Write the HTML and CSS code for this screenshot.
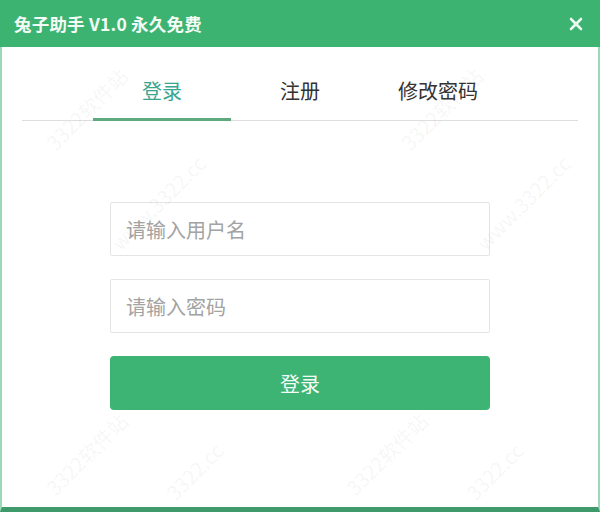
FILE: index.html
```html
<!DOCTYPE html>
<html lang="zh-CN">
<head>
<meta charset="utf-8">
<title>兔子助手</title>
<link rel="stylesheet" href="styles.css">
</head>
<body>
<div class="window">
  <header class="titlebar">
    <span class="title">兔子助手 V1.0 永久免费</span>
    <span class="close" aria-label="关闭">
      <svg width="14" height="14" viewBox="0 0 14 14"><path d="M2 2 L12 12 M12 2 L2 12" stroke="#eefaf2" stroke-width="2.6" stroke-linecap="round"/></svg>
    </span>
  </header>
  <main class="content">
    <nav class="tabs-wrap">
      <div class="tabs">
        <div class="tab active">登录</div>
        <div class="tab">注册</div>
        <div class="tab">修改密码</div>
      </div>
    </nav>
    <form class="form">
      <input class="field" type="text" placeholder="请输入用户名">
      <input class="field" type="password" placeholder="请输入密码">
      <button class="btn" type="button">登录</button>
    </form>
  </main>
  <div class="watermarks" aria-hidden="true">
    <span class="wm wm1">3322软件站</span>
    <span class="wm wm2">www.3322.cc</span>
    <span class="wm wm3">3322软件站</span>
    <span class="wm wm4">www.3322.cc</span>
    <span class="wm wm5">3322软件站</span>
    <span class="wm wm6">3322.cc</span>
    <span class="wm wm7">3322软件站</span>
    <span class="wm wm8">3322.cc</span>
  </div>
</div>
</body>
</html>
```
FILE: styles.css
```css
* { box-sizing: border-box; }
html, body { margin: 0; padding: 0; }
body {
  width: 600px;
  height: 512px;
  overflow: hidden;
  background: #fff;
  font-family: "Noto Sans CJK SC", "Noto Sans", sans-serif;
}
.window {
  position: relative;
  width: 600px;
  height: 512px;
  display: flex;
  flex-direction: column;
  overflow: hidden;
}
.titlebar {
  height: 47px;
  flex: none;
  background: #3db371;
  display: flex;
  align-items: center;
  justify-content: space-between;
  padding: 0 17px 0 14px;
}
.title {
  color: #f2fbf5;
  font-size: 17.5px;
  font-weight: bold;
  letter-spacing: 0.2px;
}
.close {
  display: flex;
  align-items: center;
}
.content {
  flex: 1;
  border-left: 2px solid #9bd9b6;
  border-right: 2px solid #9bd9b6;
  border-bottom: 5px solid #3f9a6b;
  background: #fff;
}
.tabs-wrap {
  margin: 0 20px;
  border-bottom: 1px solid #dedede;
}
.tabs {
  display: flex;
  justify-content: center;
}
.tab {
  width: 138px;
  text-align: center;
  font-size: 20px;
  line-height: 26px;
  padding: 31px 0 14px;
  color: #333;
  border-bottom: 3px solid transparent;
  margin-bottom: -1px;
}
.tab.active {
  color: #3aa58f;
  border-bottom-color: #5fa97e;
}
.form {
  width: 380px;
  margin: 81px auto 0;
  display: flex;
  flex-direction: column;
  gap: 23px;
}
.field {
  height: 54px;
  border: 1px solid #e4e4e4;
  border-radius: 2px;
  padding: 0 15px;
  font-family: inherit;
  font-size: 20px;
  color: #333;
  outline: none;
  background: #fff;
}
.field::placeholder { color: #a3a3a3; }
.btn {
  height: 54px;
  border: none;
  border-radius: 4px;
  background: #3db374;
  color: #f4fbf6;
  font-family: inherit;
  font-size: 20px;
}
.watermarks {
  position: absolute;
  inset: 47px 0 0 0;
  pointer-events: none;
}
.wm {
  position: absolute;
  font-size: 20px;
  color: rgba(0, 0, 0, 0.055);
  white-space: nowrap;
  transform: rotate(-45deg);
  transform-origin: left bottom;
  font-family: "Noto Sans CJK SC", sans-serif;
}
.wm1 { left: 60px; top: 80px; }
.wm2 { left: 125px; top: 180px; }
.wm3 { left: 415px; top: 80px; }
.wm4 { left: 490px; top: 180px; }
.wm5 { left: 60px; top: 425px; }
.wm6 { left: 180px; top: 430px; }
.wm7 { left: 360px; top: 425px; }
.wm8 { left: 480px; top: 430px; }
```
